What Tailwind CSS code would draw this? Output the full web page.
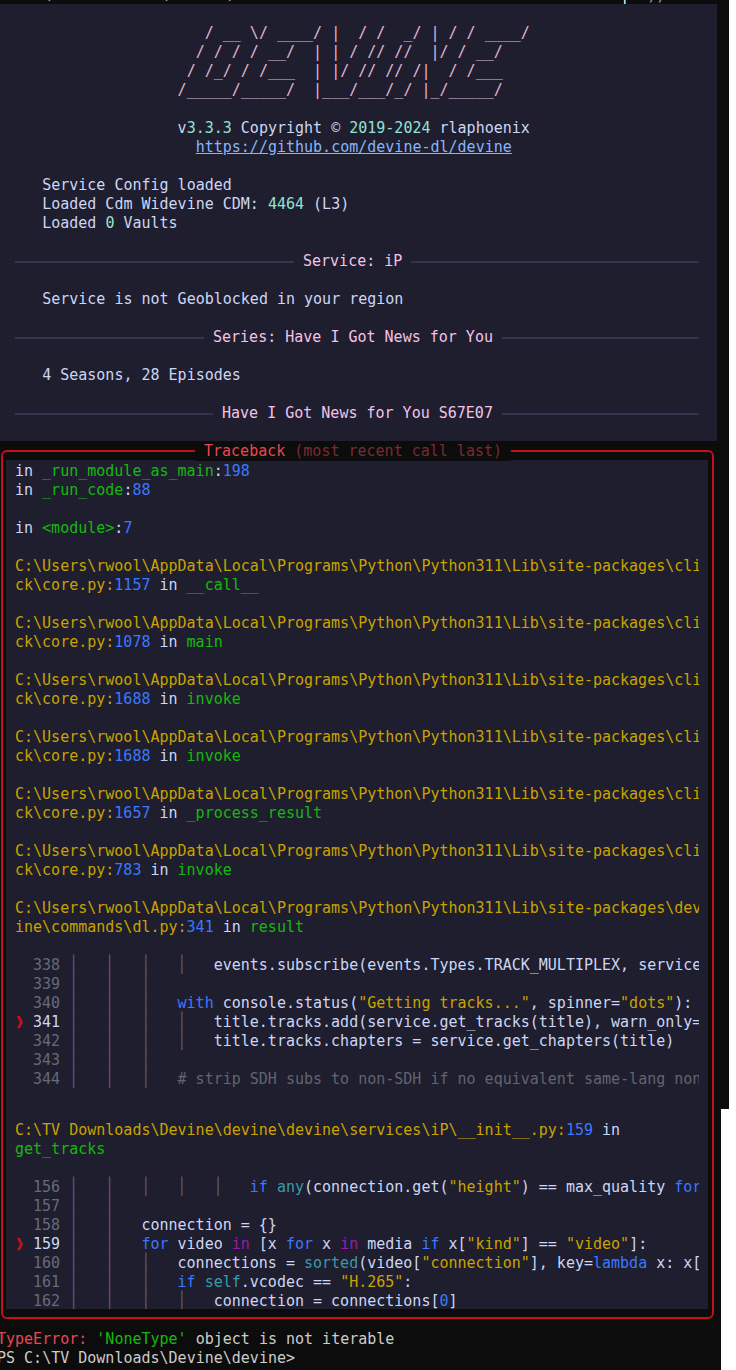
<!DOCTYPE html>
<html lang="en">

<head>
    <meta charset="UTF-8">
    <title>Devine traceback</title>
    <script src="https://cdn.jsdelivr.net/npm/@tailwindcss/browser@4"></script>
</head>

<body class="bg-white">
    <div class="relative w-[729px] h-[1370px] overflow-hidden bg-[#0c0c0c]">

        <!-- Tail of the scrolled-off line -->
        <div class="h-[4px] overflow-hidden">
            <pre class="-mt-[14px] -ml-[3px] font-['DejaVu_Sans_Mono'] text-[15px] leading-[19px] text-[#a8a8a8]">     \            \      \                                           <span class="text-white">|</span>  ))</pre>
        </div>

        <!-- Banner panel -->
        <div class="w-[717px] bg-[#1e1e2e] pt-[20px] pb-[18px] text-[#cdd6f4]">
            <pre class="-ml-[3px] font-['DejaVu_Sans_Mono'] text-[15px] leading-[19px]"><span class="text-[#e3b4d5]">                       / __ \/ ____/ |  / /  _/ | / / ____/
                      / / / / __/  | | / // //  |/ / __/
                     / /_/ / /___  | |/ // // /|  / /___
                    /_____/_____/  |___/___/_/ |_/_____/</span>

                    v<span class="text-[#94e2d5]">3.3.3</span> Copyright © <span class="text-[#94e2d5]">2019-2024</span> rlaphoenix
                      <a class="text-[#89b4fa] underline">https://github.com/devine-dl/devine</a>

     Service Config loaded
     Loaded Cdm Widevine CDM: <span class="text-[#94e2d5]">4464</span> (L3)
     Loaded <span class="text-[#94e2d5]">0</span> Vaults

</pre>
            <div class="flex items-center h-[19px] ml-[15px] w-[684px] text-[#f5c2e7]">
                <div class="w-[279px] h-[2px] bg-[#34344e]"></div>
                <pre class="mx-[9px] font-['DejaVu_Sans_Mono'] text-[15px] leading-[19px]">Service: iP</pre>
                <div class="flex-1 h-[2px] bg-[#34344e]"></div>
            </div>
            <pre class="-ml-[3px] font-['DejaVu_Sans_Mono'] text-[15px] leading-[19px]">

     Service is not Geoblocked in your region

</pre>
            <div class="flex items-center h-[19px] ml-[15px] w-[684px] text-[#f5c2e7]">
                <div class="w-[189px] h-[2px] bg-[#34344e]"></div>
                <pre class="mx-[9px] font-['DejaVu_Sans_Mono'] text-[15px] leading-[19px]">Series: Have I Got News for You</pre>
                <div class="flex-1 h-[2px] bg-[#34344e]"></div>
            </div>
            <pre class="-ml-[3px] font-['DejaVu_Sans_Mono'] text-[15px] leading-[19px]">

     4 Seasons, 28 Episodes

</pre>
            <div class="flex items-center h-[19px] ml-[15px] w-[684px] text-[#f5c2e7]">
                <div class="w-[198px] h-[2px] bg-[#34344e]"></div>
                <pre class="mx-[9px] font-['DejaVu_Sans_Mono'] text-[15px] leading-[19px]">Have I Got News for You S67E07</pre>
                <div class="flex-1 h-[2px] bg-[#34344e]"></div>
            </div>
        </div>

        <!-- Traceback box -->
        <div class="relative ml-[1px] mt-[9px] w-[713px] h-[869px] border-2 border-[#c50f1f] rounded-[6px] pt-[8px] pl-[3px] pr-[4px]">
            <pre class="absolute -top-[10px] left-[192px] px-[9px] bg-[#0c0c0c] font-['DejaVu_Sans_Mono'] text-[15px] leading-[19px] text-[#e74856]">Traceback <span class="text-[#772b35]">(most recent call last)</span></pre>

            <div class="h-[849px] overflow-hidden bg-[#1e1e2e] pt-[2px] pl-[9px] text-[#cdd6f4]">
                <pre class="w-[684px] overflow-hidden font-['DejaVu_Sans_Mono'] text-[15px] leading-[19px]">in <span class="text-[#16b80f]">_run_module_as_main</span>:<span class="text-[#3b78ff]">198</span>
in <span class="text-[#16b80f]">_run_code</span>:<span class="text-[#3b78ff]">88</span>

in <span class="text-[#16b80f]">&lt;module&gt;</span>:<span class="text-[#3b78ff]">7</span>

<span class="text-[#c9a300]">C:\Users\rwool\AppData\Local\Programs\Python\Python311\Lib\site-packages\cli
ck\core.py:</span><span class="text-[#3b78ff]">1157</span> in <span class="text-[#16b80f]">__call__</span>

<span class="text-[#c9a300]">C:\Users\rwool\AppData\Local\Programs\Python\Python311\Lib\site-packages\cli
ck\core.py:</span><span class="text-[#3b78ff]">1078</span> in <span class="text-[#16b80f]">main</span>

<span class="text-[#c9a300]">C:\Users\rwool\AppData\Local\Programs\Python\Python311\Lib\site-packages\cli
ck\core.py:</span><span class="text-[#3b78ff]">1688</span> in <span class="text-[#16b80f]">invoke</span>

<span class="text-[#c9a300]">C:\Users\rwool\AppData\Local\Programs\Python\Python311\Lib\site-packages\cli
ck\core.py:</span><span class="text-[#3b78ff]">1688</span> in <span class="text-[#16b80f]">invoke</span>

<span class="text-[#c9a300]">C:\Users\rwool\AppData\Local\Programs\Python\Python311\Lib\site-packages\cli
ck\core.py:</span><span class="text-[#3b78ff]">1657</span> in <span class="text-[#16b80f]">_process_result</span>

<span class="text-[#c9a300]">C:\Users\rwool\AppData\Local\Programs\Python\Python311\Lib\site-packages\cli
ck\core.py:</span><span class="text-[#3b78ff]">783</span> in <span class="text-[#16b80f]">invoke</span>

<span class="text-[#c9a300]">C:\Users\rwool\AppData\Local\Programs\Python\Python311\Lib\site-packages\dev
ine\commands\dl.py:</span><span class="text-[#3b78ff]">341</span> in <span class="text-[#16b80f]">result</span>

<span class="text-[#676a78]">  338 <span class="inline-block scale-y-110 font-bold text-[#5c5f6e]">│   │   │   │</span>   <span class="text-[#cdd6f4]">events.subscribe(events.Types.TRACK_MULTIPLEX, service</span>
  339 <span class="inline-block scale-y-110 font-bold text-[#5c5f6e]">│   │   │</span>
  340 <span class="inline-block scale-y-110 font-bold text-[#5c5f6e]">│   │   │</span>   <span class="text-[#3b78ff]">with</span> <span class="text-[#cdd6f4]">console.status(<span class="text-[#c9a300]">"Getting tracks..."</span>, spinner=<span class="text-[#c9a300]">"dots"</span>):</span>
<span class="text-[#c50f1f]">❱</span> <span class="text-[#cdd6f4]">341</span> <span class="inline-block scale-y-110 font-bold text-[#5c5f6e]">│   │   │   │</span>   <span class="text-[#cdd6f4]">title.tracks.add(service.get_tracks(title), warn_only=</span>
  342 <span class="inline-block scale-y-110 font-bold text-[#5c5f6e]">│   │   │   │</span>   <span class="text-[#cdd6f4]">title.tracks.chapters = service.get_chapters(title)</span>
  343 <span class="inline-block scale-y-110 font-bold text-[#5c5f6e]">│   │   │</span>
  344 <span class="inline-block scale-y-110 font-bold text-[#5c5f6e]">│   │   │</span>   <span class="text-[#62646f]"># strip SDH subs to non-SDH if no equivalent same-lang non</span></span></pre>

                <pre class="mt-[32px] w-[684px] overflow-hidden font-['DejaVu_Sans_Mono'] text-[15px] leading-[19px]"><span class="text-[#c9a300]">C:\TV Downloads\Devine\devine\devine\services\iP\__init__.py:</span><span class="text-[#3b78ff]">159</span> in
<span class="text-[#16b80f]">get_tracks</span>

<span class="text-[#676a78]">  156 <span class="inline-block scale-y-110 font-bold text-[#5c5f6e]">│   │   │   │   │</span>   <span class="text-[#cdd6f4]"><span class="text-[#3b78ff]">if</span> <span class="text-[#3a9aa8]">any</span>(connection.get(<span class="text-[#c9a300]">"height"</span>) == max_quality <span class="text-[#3b78ff]">for</span></span>
  157 <span class="inline-block scale-y-110 font-bold text-[#5c5f6e]">│   │</span>
  158 <span class="inline-block scale-y-110 font-bold text-[#5c5f6e]">│   │</span>   <span class="text-[#cdd6f4]">connection = {}</span>
<span class="text-[#c50f1f]">❱</span> <span class="text-[#cdd6f4]">159</span> <span class="inline-block scale-y-110 font-bold text-[#5c5f6e]">│   │</span>   <span class="text-[#cdd6f4]"><span class="text-[#3b78ff]">for</span> video <span class="text-[#9a1aab]">in</span> [x <span class="text-[#3b78ff]">for</span> x <span class="text-[#9a1aab]">in</span> media <span class="text-[#3b78ff]">if</span> x[<span class="text-[#c9a300]">"kind"</span>] == <span class="text-[#c9a300]">"video"</span>]:</span>
  160 <span class="inline-block scale-y-110 font-bold text-[#5c5f6e]">│   │   │</span>   <span class="text-[#cdd6f4]">connections = <span class="text-[#3a9aa8]">sorted</span>(video[<span class="text-[#c9a300]">"connection"</span>], key=<span class="text-[#3b78ff]">lambda</span> x: x[</span>
  161 <span class="inline-block scale-y-110 font-bold text-[#5c5f6e]">│   │   │</span>   <span class="text-[#cdd6f4]"><span class="text-[#3b78ff]">if</span> <span class="text-[#3a9aa8]">self</span>.vcodec == <span class="text-[#c9a300]">"H.265"</span>:</span>
  162 <span class="inline-block scale-y-110 font-bold text-[#5c5f6e]">│   │   │   │</span>   <span class="text-[#cdd6f4]">connection = connections[<span class="text-[#3b78ff]">0</span>]</span></span></pre>
            </div>
        </div>

        <!-- Prompt -->
        <pre class="mt-[11px] -ml-[3px] font-['DejaVu_Sans_Mono'] text-[15px] leading-[19px] text-[#cccccc]"><span class="text-[#e74856]">TypeError:</span> <span class="text-[#16b80f]">'NoneType'</span> object is not iterable
PS C:\TV Downloads\Devine\devine&gt;</pre>

        <!-- White corner left by the crop -->
        <div class="absolute left-[721px] top-[1109px] bottom-0 right-0 bg-white"></div>
    </div>
</body>

</html>
